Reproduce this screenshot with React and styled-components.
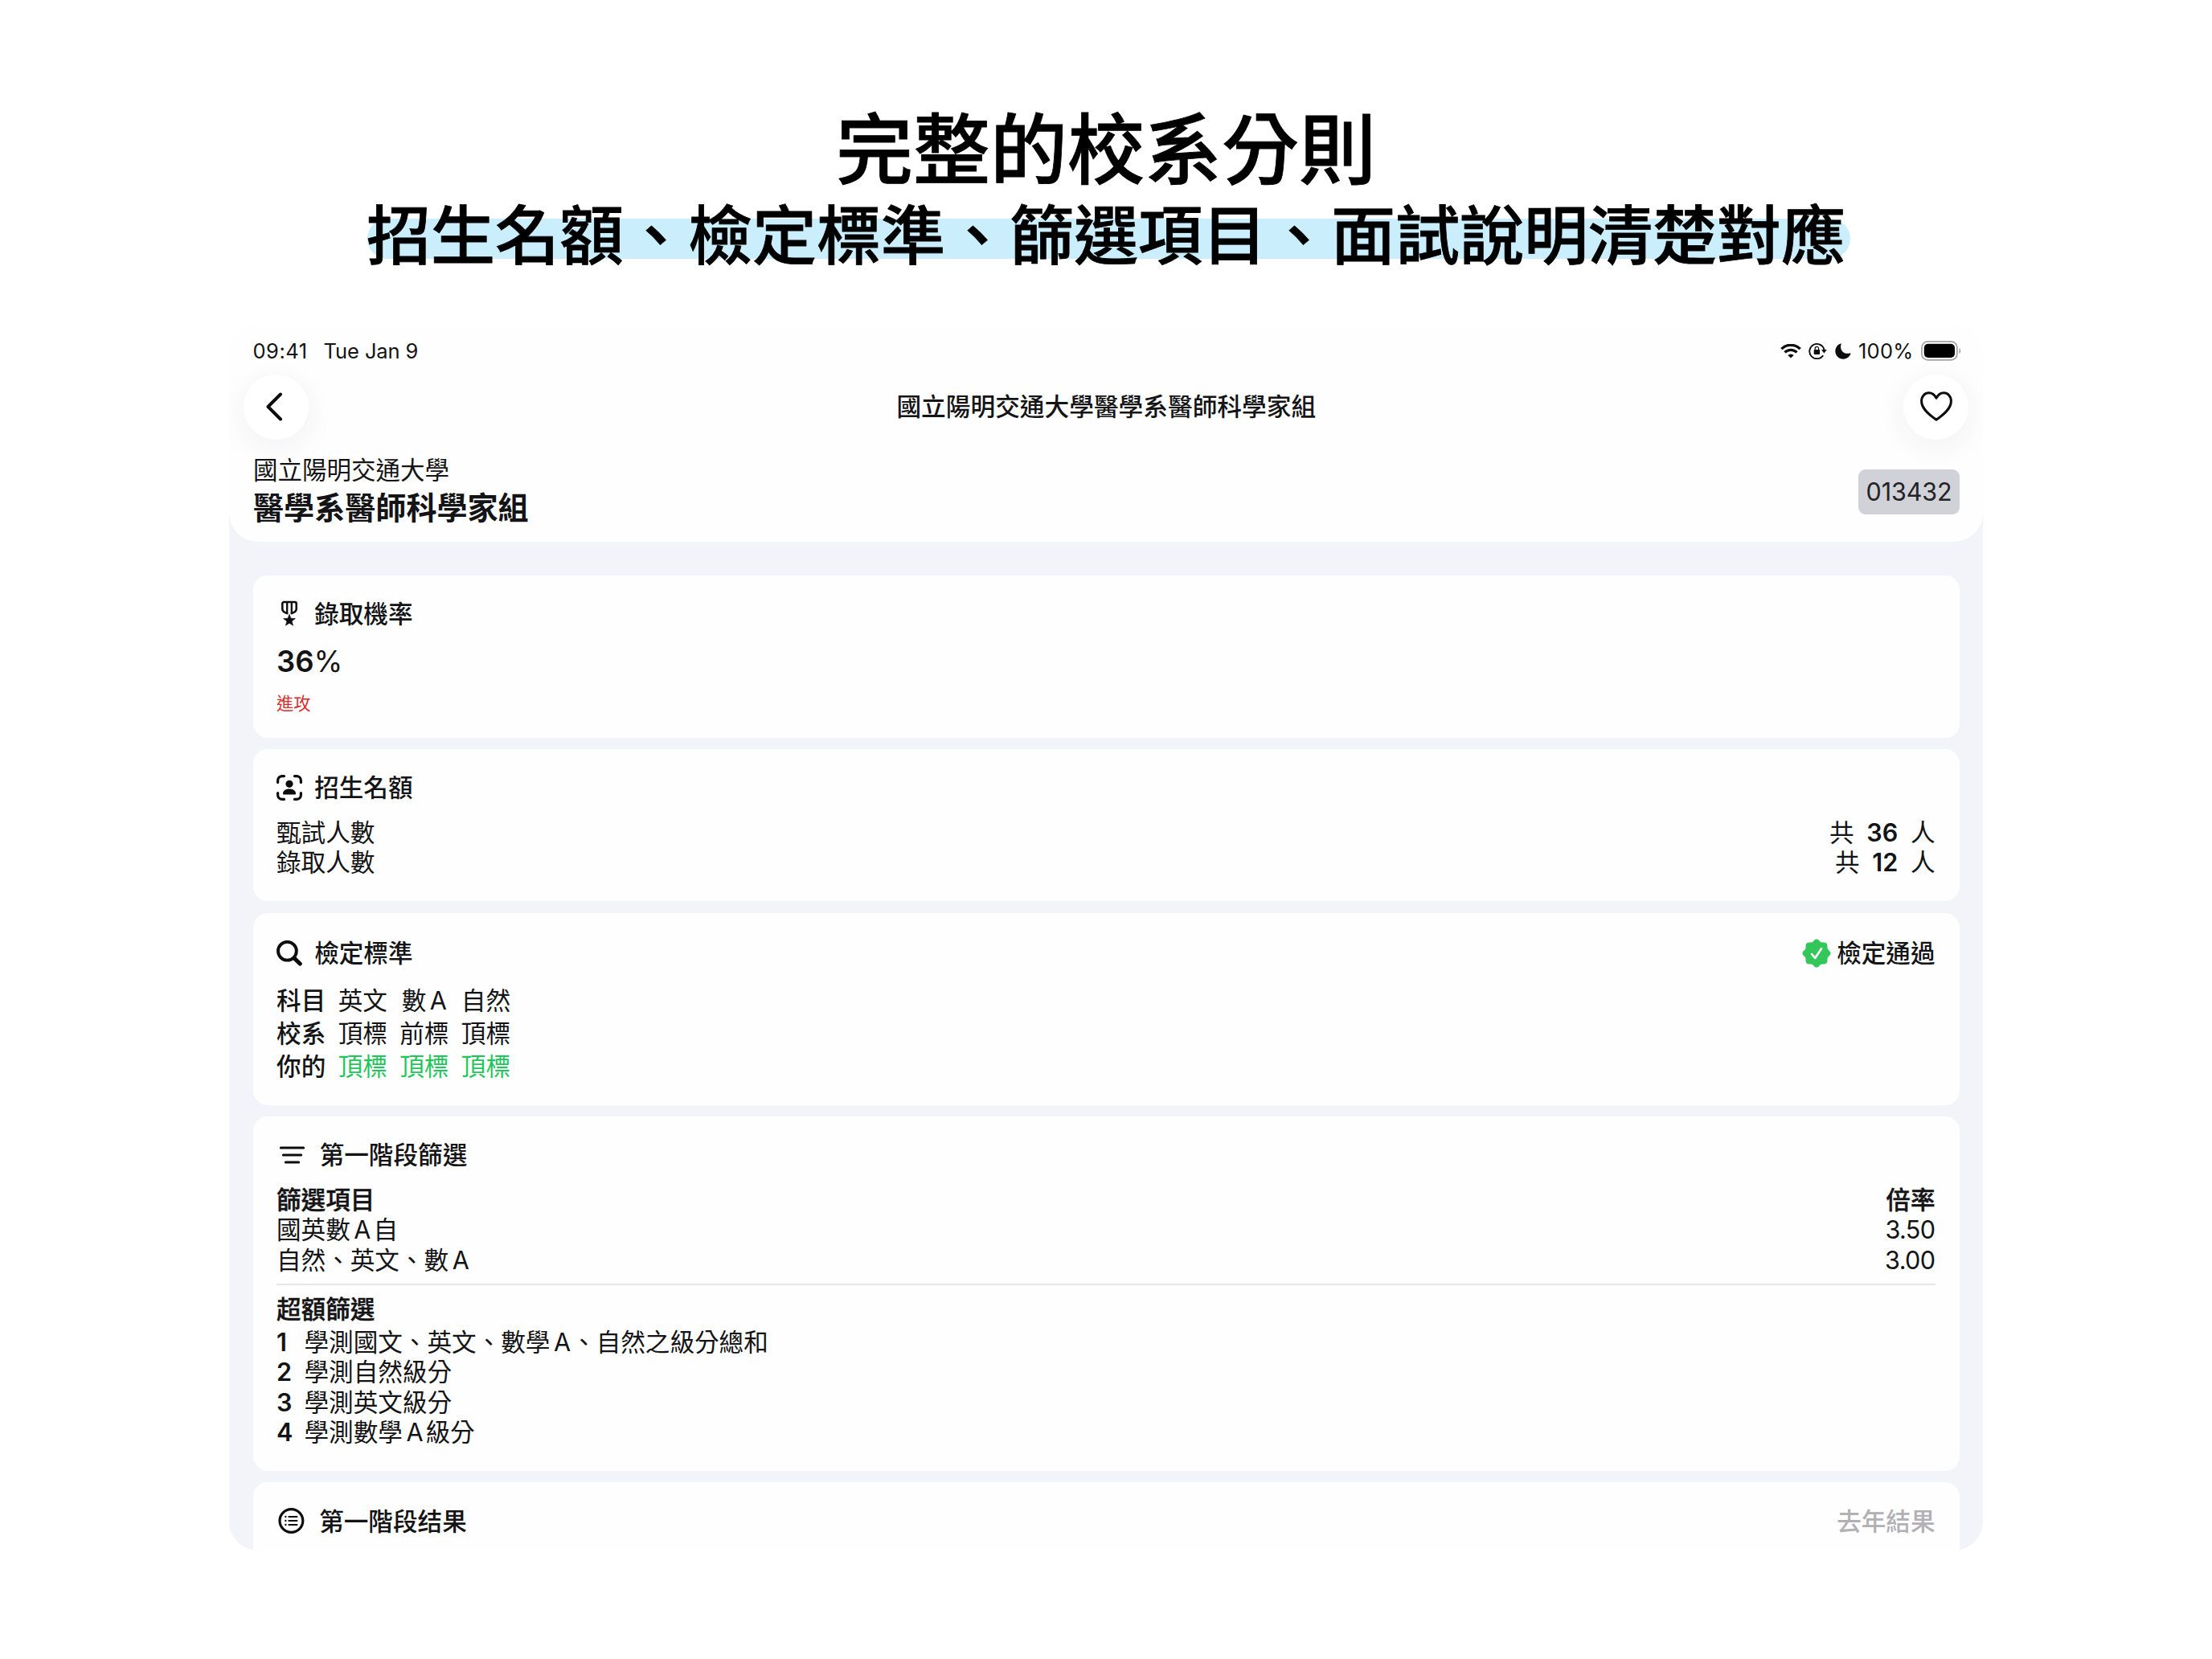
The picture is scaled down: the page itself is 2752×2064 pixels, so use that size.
import React from "react";
import styled, { createGlobalStyle } from "styled-components";

const GlobalStyle = createGlobalStyle`
  * { box-sizing: border-box; }
  html, body { margin: 0; padding: 0; background: #ffffff; }
  body {
    font-family: Inter, "Noto Sans CJK TC", "Noto Sans CJK SC", sans-serif;
    color: #141416;
    text-autospace: no-autospace;
  }
`;

const Page = styled.main`
  width: 2752px;
  height: 2064px;
  display: flex;
  flex-direction: column;
  align-items: center;
  overflow: hidden;
  background: #ffffff;
`;

const Hero = styled.header`
  height: 407px;
  padding-top: 136px;
  display: flex;
  flex-direction: column;
  align-items: center;
  color: #000;
  font-weight: 500;
  white-space: nowrap;
  -webkit-text-stroke: 0.8px #000;
`;

const HeroTitle = styled.h1`
  margin: 0;
  font-size: 96px;
  font-weight: 500;
  line-height: 100px;
`;

const HeroSubtitle = styled.h2`
  position: relative;
  margin: 7px 0 0;
  font-size: 80px;
  font-weight: 500;
  line-height: 100px;
  isolation: isolate;

  &::before {
    content: "";
    position: absolute;
    z-index: -1;
    left: 1px;
    right: -6px;
    top: 29px;
    height: 50px;
    border-radius: 25px;
    background: #caeefc;
  }
`;

const Screen = styled.section`
  width: 2182px;
  height: 1522px;
  border-radius: 36px;
  overflow: hidden;
  background: #f3f3fa;
  display: flex;
  flex-direction: column;
`;

const TopPanel = styled.div`
  flex: none;
  height: 267px;
  border-radius: 0 0 36px 36px;
  background: #fefefe;
  overflow: hidden;
`;

const StatusBar = styled.div`
  height: 58px;
  padding: 1px 27px 0 29.5px;
  display: flex;
  justify-content: space-between;
  align-items: center;
  font-size: 25.5px;
  line-height: 40px;
`;

const StatusGroup = styled.div`
  display: flex;
  align-items: center;
  gap: ${(p) => p.$gap}px;
`;

const StatusText = styled.span`
  letter-spacing: ${(p) => p.$track || 0}px;
`;

const NavBar = styled.nav`
  height: 82px;
  padding: 0 17.5px 0 18px;
  display: flex;
  justify-content: space-between;
  align-items: center;
`;

const NavTitle = styled.div`
  font-size: 30.7px;
  font-weight: 500;
  line-height: 40px;
`;

const RoundButton = styled.button`
  width: 81px;
  height: 81px;
  padding: 0;
  border: 0;
  border-radius: 50%;
  background: #fff;
  box-shadow: 0 8px 36px rgba(60, 40, 90, 0.065);
  display: flex;
  align-items: center;
  justify-content: center;
`;

const Identity = styled.div`
  padding: 18px 29px 0 30px;
  display: flex;
  justify-content: space-between;
`;

const School = styled.div`
  font-size: 30.5px;
  line-height: 40px;
`;

const Department = styled.div`
  font-size: 38.1px;
  font-weight: 700;
  line-height: 54px;
`;

const Code = styled.div`
  width: 126px;
  height: 56px;
  margin-top: 19px;
  border-radius: 9px;
  background: #d1d1d8;
  color: #232327;
  font-size: 30.5px;
  letter-spacing: -0.1px;
  line-height: 56px;
  text-align: center;
`;

const Cards = styled.div`
  flex: 1;
  padding: 41.7px 29px 0 30px;
  display: flex;
  flex-direction: column;
  gap: 14.6px;
`;

const Card = styled.article`
  flex: none;
  height: ${(p) => p.$height}px;
  padding: ${(p) => p.$top || 29}px 30.5px 0 29px;
  border-radius: 18px;
  background: #fefefe;
  font-size: 30.6px;
  line-height: 37.5px;
`;

const CardHead = styled.div`
  height: 37.5px;
  display: flex;
  align-items: center;
  justify-content: space-between;
  font-weight: 500;
`;

const CardTitle = styled.div`
  display: flex;
  align-items: center;
`;

const IconSlot = styled.span`
  width: ${(p) => p.$width || 47.2}px;
  display: flex;
  align-items: center;
`;

const Passed = styled.div`
  display: flex;
  align-items: center;
  gap: 7.5px;
`;

const LastYear = styled.div`
  color: #b2b0b5;
`;

const Percent = styled.div`
  margin-top: 18px;
  font-size: 36.5px;
  font-weight: 600;
  line-height: 46px;
`;

const PercentSign = styled.span`
  font-weight: 400;
`;

const Strategy = styled.div`
  margin-top: 14px;
  font-size: 21.3px;
  line-height: 30px;
  color: #d92a2a;
`;

const Rows = styled.div`
  margin-top: ${(p) => p.$top}px;
`;

const Row = styled.div`
  display: flex;
  justify-content: space-between;
  font-weight: ${(p) => (p.$strong ? 500 : 400)};
  -webkit-text-stroke: ${(p) => (p.$strong ? "0.4px #141416" : "0")};
`;

const Ratio = styled.span`
  letter-spacing: -0.6px;
`;

const Count = styled.div`
  display: flex;
  gap: 15.7px;
`;

const Strong = styled.b`
  font-weight: 600;
`;

const Standards = styled.div`
  margin-top: 19px;
  display: grid;
  grid-template-columns: repeat(4, 61.4px);
  column-gap: 15.2px;
  grid-auto-rows: 41px;
  line-height: 41px;
  white-space: nowrap;
  text-align: center;
`;

const Cell = styled.span`
  font-weight: ${(p) => (p.$head ? 500 : 400)};
  color: ${(p) => (p.$good ? "#1fc75a" : "inherit")};
`;

const Latin = styled.span`
  margin: 0 ${(p) => (p.$after ?? 3)}px 0 4.5px;
`;

const Divider = styled.div`
  height: 2px;
  margin: 11px 0 10.5px;
  background: #e6e6e8;
`;

const Ordered = styled.div`
  display: flex;
`;

const Index = styled.span`
  width: 34.5px;
  font-weight: 600;
`;

const ink = "#0d0d0f";

const ChevronSvg = styled.svg`
  margin-right: 5px;
`;

const ChevronIcon = () => (
  <ChevronSvg width="24" height="40" viewBox="0 0 24 40" fill="none">
    <path d="M20 4.5 4.5 20 20 35.5" stroke={ink} strokeWidth="4" strokeLinecap="round" strokeLinejoin="round" />
  </ChevronSvg>
);

const HeartIcon = () => (
  <svg width="40" height="38" viewBox="0 0 40 38" fill="none">
    <path d="M20 8.2C17.8 4.2 14.6 1.8 10.9 1.8 5.6 1.8 1.6 6 1.6 12c0 9.2 8.7 16.5 18.4 23.2C29.7 28.5 38.4 21.2 38.4 12c0-6-4-10.2-9.3-10.2-3.7 0-6.900 2.400-9.100 6.400Z" stroke={ink} strokeWidth="3" strokeLinejoin="round" />
  </svg>
);

const WifiIcon = () => (
  <svg width="26" height="18" viewBox="0 0 26 18" fill="none" stroke={ink}>
    <path d="M1.300 6.100a16.600 16.600 0 0 1 23.400 0" strokeWidth="3.300" />
    <path d="M5.500 10.400a10.600 10.600 0 0 1 15 0" strokeWidth="3.200" />
    <path d="M13 17.600 9.300 13.900a5.300 5.300 0 0 1 7.400 0Z" fill={ink} stroke="none" />
  </svg>
);

const RotationLockIcon = () => (
  <svg width="23" height="21" viewBox="0 0 23 21" fill="none">
    <path d="M17.700 16.800A9.200 9.200 0 1 1 19.300 8.500" stroke={ink} strokeWidth="1.900" strokeLinecap="round" />
    <path d="M16 9h6.800l-3.400 4.600Z" fill={ink} />
    <rect x="6.700" y="9" width="7.400" height="6" rx="1" fill={ink} />
    <path d="M8.200 9.500V7.500a2.200 2.200 0 0 1 4.400 0v2" stroke={ink} strokeWidth="1.200" />
  </svg>
);

const MoonIcon = () => (
  <svg width="20" height="20" viewBox="0 0 20 20">
    <path d="M6.800.4c.5-.2 1 .2.800.8-2.300 7 3.200 13.300 10.900 11.200.7-.2 1.200.3.900.9C18 17 14.500 19.700 10.300 19.700 4.800 19.700.3 15.500.3 10 .3 5.600 2.900 2 6.800.4Z" fill={ink} />
  </svg>
);

const BatteryIcon = () => (
  <svg width="50" height="25" viewBox="0 0 50 25" fill="none">
    <rect x="0.900" y="0.900" width="44" height="23" rx="7.500" stroke="#a3a3a6" strokeWidth="1.700" />
    <rect x="3.800" y="3.800" width="38.200" height="17.200" rx="5" fill="#000" />
    <path d="M47.500 9v7c2.400-1 2.400-6 0-7Z" fill="#a3a3a6" />
  </svg>
);

const MedalIcon = () => (
  <svg width="32" height="32" viewBox="0 0 32 32" fill="none">
    <path d="M13.200 16.200 10 14.700C8.200 13.700 7.300 12.400 7.300 10.400V4.100c0-1.200.8-2 2-2h13.400c1.200 0 2 .8 2 2v6.300c0 2-.9 3.300-2.700 4.300l-3.200 1.500" stroke={ink} strokeWidth="2.500" strokeLinecap="round" strokeLinejoin="round" />
    <path d="M13.200 2.500v13.500M18.800 2.500v13.500" stroke={ink} strokeWidth="2.300" />
    <path d="m16 17.200 1.900 5.100 5.500.2-4.300 3.400 1.500 5.300-4.600-3-4.600 3 1.500-5.300-4.300-3.400 5.500-.2Z" fill={ink} stroke={ink} strokeWidth="0.600" strokeLinejoin="round" />
  </svg>
);

const PersonFrameIcon = () => (
  <svg width="32" height="32" viewBox="0 0 32 32" fill="none">
    <path d="M1.600 9.500V7a5.400 5.400 0 0 1 5.400-5.400h2.500M22.500 1.600H25A5.400 5.400 0 0 1 30.400 7v2.500M30.400 22.500V25a5.400 5.400 0 0 1-5.400 5.400h-2.500M9.500 30.400H7A5.400 5.400 0 0 1 1.600 25v-2.500" stroke={ink} strokeWidth="3.200" strokeLinecap="round" />
    <circle cx="16" cy="11.300" r="4.600" fill={ink} />
    <path d="M8 23.200c0-3.600 3.600-5.700 8-5.700s8 2.100 8 5.700c0 .8-.5 1.300-1.300 1.300H9.300c-.8 0-1.300-.5-1.300-1.300Z" fill={ink} />
  </svg>
);

const SearchIcon = () => (
  <svg width="33" height="32" viewBox="0 0 33 32" fill="none" stroke={ink}>
    <circle cx="13.400" cy="13.200" r="11.400" strokeWidth="3.900" />
    <path d="m22 22 7.200 7" strokeWidth="5.200" strokeLinecap="round" />
  </svg>
);

const FilterIcon = () => (
  <svg width="40" height="22" viewBox="0 0 40 22" fill="none" stroke={ink} strokeWidth="3.200" strokeLinecap="round">
    <path d="M5.400 2h28.200M8.400 11h22.200M11.400 20h16.200" />
  </svg>
);

const ListCircleIcon = () => (
  <svg width="36" height="32" viewBox="-2 0 36 32" fill="none" stroke={ink}>
    <circle cx="16.400" cy="16" r="14.400" strokeWidth="3.200" />
    <path d="M13.300 11h10.200M13.300 16h10.200M13.300 21h10.200" strokeWidth="2" strokeLinecap="round" />
    <path d="M9.300 11h.1M9.300 16h.1M9.300 21h.1" strokeWidth="2.300" strokeLinecap="round" />
  </svg>
);

const sealPath = (() => {
  const points = [];
  for (let i = 0; i < 144; i += 1) {
    const a = (i / 144) * Math.PI * 2;
    const r = 16.2 + 1.3 * Math.cos(a * 8);
    points.push(`${(18 + r * Math.cos(a)).toFixed(2)} ${(18 + r * Math.sin(a)).toFixed(2)}`);
  }
  return `M${points.join("L")}Z`;
})();

const SealIcon = () => (
  <svg width="36" height="36" viewBox="0 0 36 36" fill="none">
    <path d={sealPath} fill="#33c75a" />
    <path d="m12 19 4.200 5 7.800-11.800" stroke="#fff" strokeWidth="2.700" strokeLinecap="round" strokeLinejoin="round" />
  </svg>
);

const quotas = [
  ["甄試人數", 36],
  ["錄取人數", 12],
];

export default function App() {
  return (
    <>
      <GlobalStyle />
      <Page>
        <Hero>
          <HeroTitle>完整的校系分則</HeroTitle>
          <HeroSubtitle>招生名額、檢定標準、篩選項目、面試說明清楚對應</HeroSubtitle>
        </Hero>

        <Screen>
          <TopPanel>
            <StatusBar>
              <StatusGroup $gap={20}>
                <StatusText $track={0.5}>09:41</StatusText>
                <StatusText $track={-0.1}>Tue Jan 9</StatusText>
              </StatusGroup>
              <StatusGroup $gap={9.3}>
                <WifiIcon />
                <RotationLockIcon />
                <MoonIcon />
                <StatusText $track={0.3}>100%</StatusText>
                <BatteryIcon />
              </StatusGroup>
            </StatusBar>
            <NavBar>
              <RoundButton aria-label="返回"><ChevronIcon /></RoundButton>
              <NavTitle>國立陽明交通大學醫學系醫師科學家組</NavTitle>
              <RoundButton aria-label="收藏"><HeartIcon /></RoundButton>
            </NavBar>
            <Identity>
              <div>
                <School>國立陽明交通大學</School>
                <Department>醫學系醫師科學家組</Department>
              </div>
              <Code>013432</Code>
            </Identity>
          </TopPanel>

          <Cards>
            <Card $height={202}>
              <CardHead>
                <CardTitle><IconSlot><MedalIcon /></IconSlot>錄取機率</CardTitle>
              </CardHead>
              <Percent>36<PercentSign>%</PercentSign></Percent>
              <Strategy>進攻</Strategy>
            </Card>

            <Card $height={189}>
              <CardHead>
                <CardTitle><IconSlot><PersonFrameIcon /></IconSlot>招生名額</CardTitle>
              </CardHead>
              <Rows $top={18}>
                {quotas.map(([label, n]) => (
                  <Row key={label}>
                    <span>{label}</span>
                    <Count><span>共</span><Strong>{n}</Strong><span>人</span></Count>
                  </Row>
                ))}
              </Rows>
            </Card>

            <Card $height={238.7} $top={31.5}>
              <CardHead>
                <CardTitle><IconSlot><SearchIcon /></IconSlot>檢定標準</CardTitle>
                <Passed><SealIcon />檢定通過</Passed>
              </CardHead>
              <Standards>
                <Cell $head>科目</Cell><Cell>英文</Cell><Cell>數<Latin $after={0}>A</Latin></Cell><Cell>自然</Cell>
                <Cell $head>校系</Cell><Cell>頂標</Cell><Cell>前標</Cell><Cell>頂標</Cell>
                <Cell $head>你的</Cell><Cell $good>頂標</Cell><Cell $good>頂標</Cell><Cell $good>頂標</Cell>
              </Standards>
            </Card>

            <Card $height={440.4}>
              <CardHead>
                <CardTitle><IconSlot $width={53.7}><FilterIcon /></IconSlot>第一階段篩選</CardTitle>
              </CardHead>
              <Rows $top={18}>
                <Row $strong><span>篩選項目</span><span>倍率</span></Row>
                <Row><span>國英數<Latin>A</Latin>自</span><Ratio>3.50</Ratio></Row>
                <Row><span>自然、英文、數<Latin $after={0}>A</Latin></span><Ratio>3.00</Ratio></Row>
              </Rows>
              <Divider />
              <Row $strong>超額篩選</Row>
              <Rows $top={3.5}>
                <Ordered><Index>1</Index><span>學測國文、英文、數學<Latin $after={1}>A</Latin>、自然之級分總和</span></Ordered>
                <Ordered><Index>2</Index><span>學測自然級分</span></Ordered>
                <Ordered><Index>3</Index><span>學測英文級分</span></Ordered>
                <Ordered><Index>4</Index><span>學測數學<Latin>A</Latin>級分</span></Ordered>
              </Rows>
            </Card>

            <Card $height={240} $top={29.5}>
              <CardHead>
                <CardTitle><IconSlot $width={53.2}><ListCircleIcon /></IconSlot>第一階段结果</CardTitle>
                <LastYear>去年結果</LastYear>
              </CardHead>
            </Card>
          </Cards>
        </Screen>
      </Page>
    </>
  );
}
